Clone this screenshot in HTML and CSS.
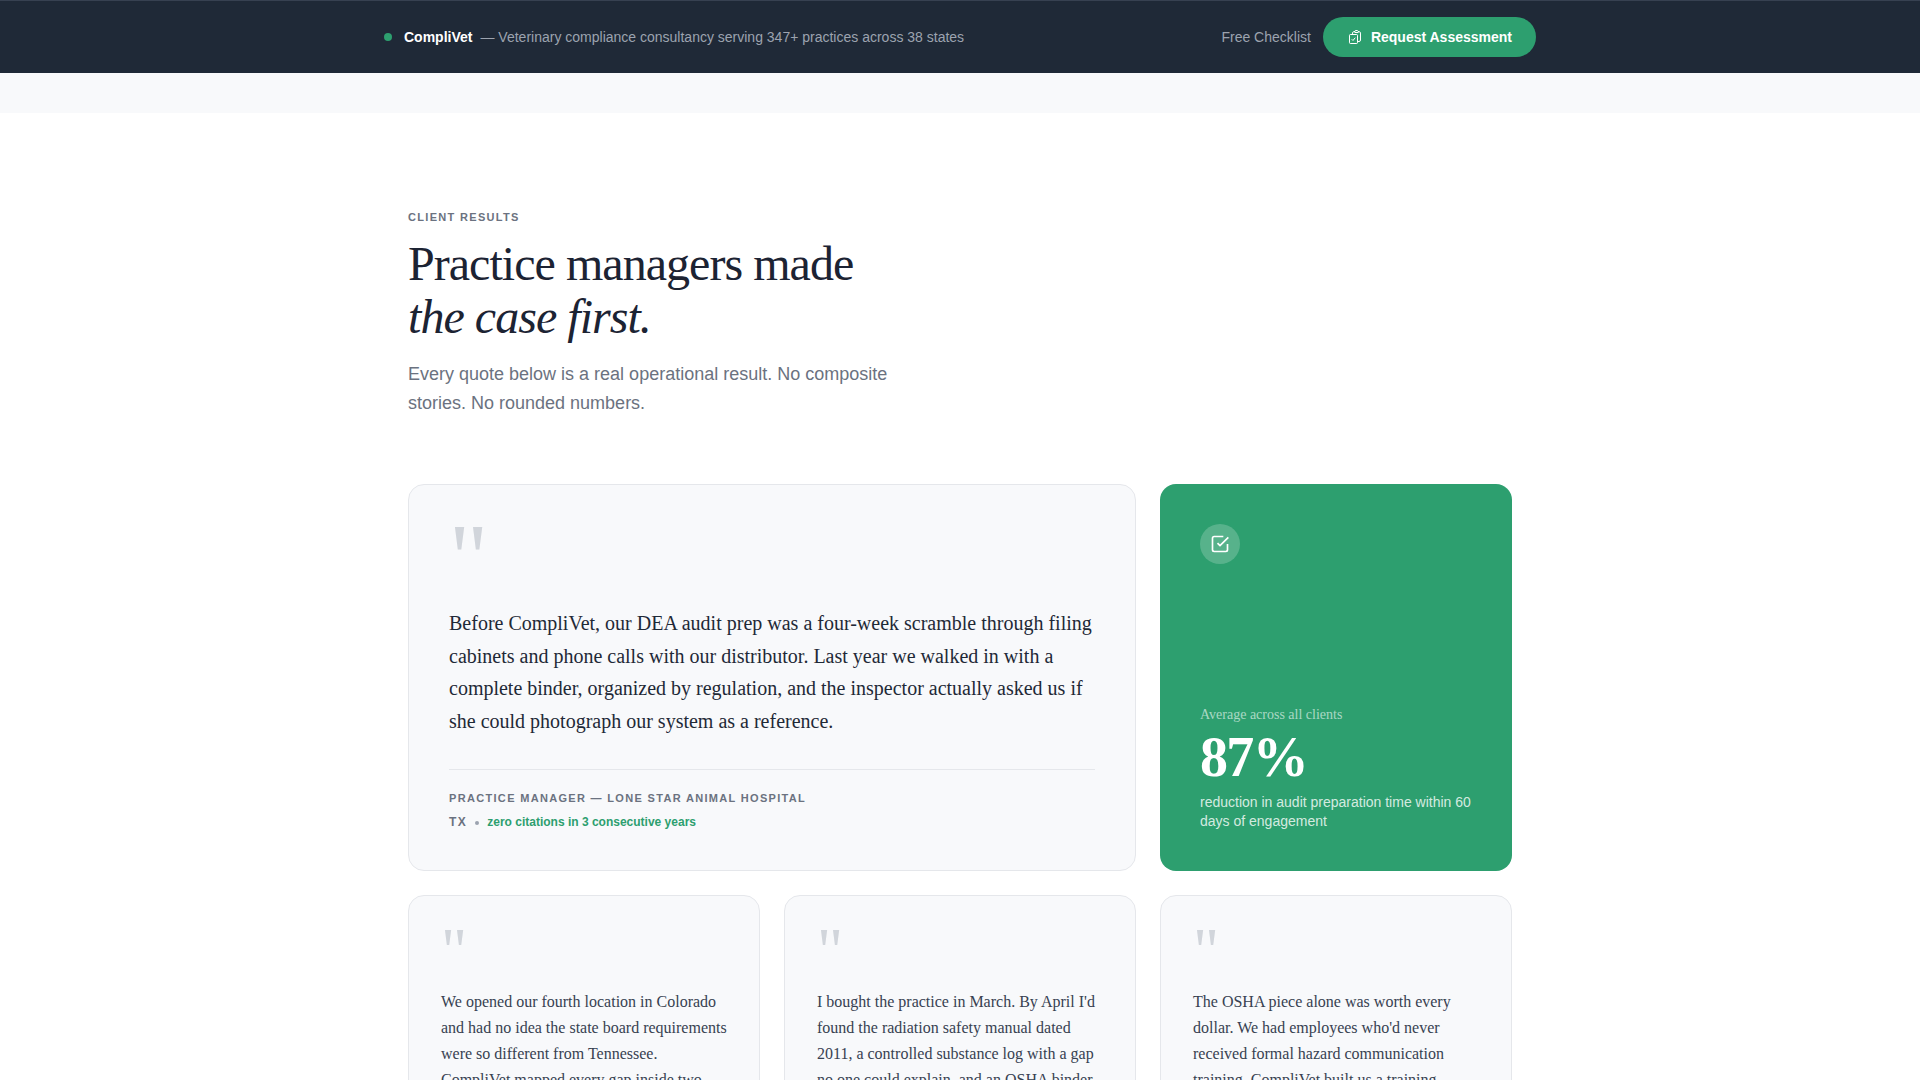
FILE: index.html
```html
<!DOCTYPE html>
<html lang="en">
<head>
  <meta charset="UTF-8">
  <meta name="viewport" content="width=device-width, initial-scale=1">
  <title>CompliVet - Client Results</title>
  <link rel="stylesheet" href="styles.css">
</head>
<body>
  <header class="topbar">
    <div class="topbar-inner">
      <div class="brand">
        <span class="brand-dot"></span>
        <p class="brand-text"><strong>CompliVet</strong><span>— Veterinary compliance consultancy serving 347+ practices across 38 states</span></p>
      </div>
      <nav class="topbar-actions">
        <a class="checklist-link" href="#checklist">Free Checklist</a>
        <a class="btn" href="#assessment">
          <svg class="btn-icon" viewBox="0 0 24 24" aria-hidden="true"><path d="M11.35 3.836c-.065.21-.1.433-.1.664 0 .414.336.75.75.75h4.5a.75.75 0 0 0 .75-.75 2.25 2.25 0 0 0-.1-.664m-5.8 0A2.251 2.251 0 0 1 13.5 2.25H15c1.012 0 1.867.668 2.15 1.586m-5.8 0c-.376.023-.75.05-1.124.08C9.095 4.01 8.25 4.973 8.25 6.108V8.25m8.9-4.414c.376.023.75.05 1.124.08 1.131.094 1.976 1.057 1.976 2.192V16.5A2.25 2.25 0 0 1 18 18.75h-2.25m-7.5-10.5H4.875c-.621 0-1.125.504-1.125 1.125v11.25c0 .621.504 1.125 1.125 1.125h9.75c.621 0 1.125-.504 1.125-1.125V18.75m-7.5-10.5h6.375c.621 0 1.125.504 1.125 1.125v9.375m-8.25-3 1.5 1.5 3-3.75"/></svg>
          Request Assessment
        </a>
      </nav>
    </div>
  </header>

  <main class="results">
    <div class="container">
      <div class="intro">
        <p class="eyebrow">Client Results</p>
        <h1>Practice managers made<br><em>the case first.</em></h1>
        <p class="lead">Every quote below is a real operational result. No composite stories. No rounded numbers.</p>
      </div>

      <div class="grid">
        <article class="card featured">
          <div class="mark" aria-hidden="true">"</div>
          <blockquote>Before CompliVet, our DEA audit prep was a four-week scramble through filing cabinets and phone calls with our distributor. Last year we walked in with a complete binder, organized by regulation, and the inspector actually asked us if she could photograph our system as a reference.</blockquote>
          <footer class="source">
            <p class="role">Practice Manager — Lone Star Animal Hospital</p>
            <p class="outcome">
              <span class="state">TX</span>
              <span class="sep"></span>
              <span class="result">zero citations in 3 consecutive years</span>
            </p>
          </footer>
        </article>

        <article class="stat">
          <div class="stat-icon">
            <svg viewBox="0 0 24 24" aria-hidden="true"><path d="M9 11l3 3L22 4"/><path d="M21 12v7a2 2 0 0 1-2 2H5a2 2 0 0 1-2-2V5a2 2 0 0 1 2-2h11"/></svg>
          </div>
          <div>
            <p class="stat-label">Average across all clients</p>
            <p class="stat-value">87%</p>
            <p class="stat-text">reduction in audit preparation time within 60 days of engagement</p>
          </div>
        </article>

        <article class="card">
          <div class="mark" aria-hidden="true">"</div>
          <blockquote>We opened our fourth location in Colorado and had no idea the state board requirements were so different from Tennessee. CompliVet mapped every gap inside two</blockquote>
        </article>

        <article class="card">
          <div class="mark" aria-hidden="true">"</div>
          <blockquote>I bought the practice in March. By April I'd found the radiation safety manual dated 2011, a controlled substance log with a gap no one could explain, and an OSHA binder</blockquote>
        </article>

        <article class="card">
          <div class="mark" aria-hidden="true">"</div>
          <blockquote>The OSHA piece alone was worth every dollar. We had employees who'd never received formal hazard communication training. CompliVet built us a training</blockquote>
        </article>
      </div>
    </div>
  </main>
</body>
</html>
```

FILE: styles.css
```css
:root {
  --green: #2d9f6f;
  --navy: #1f2937;
  --surface: #f8f9fb;
  --line: #e5e7eb;
  --muted: #6b7280;
  --serif: "Liberation Serif", "Times New Roman", serif;
  --sans: "Liberation Sans", Arial, sans-serif;
}

* {
  box-sizing: border-box;
}

body,
h1,
p,
blockquote {
  margin: 0;
}

body {
  font-family: var(--sans);
  background: var(--surface);
  color: var(--navy);
}

a {
  text-decoration: none;
}

/* Top bar */
.topbar {
  background: var(--navy);
  border-top: 1px solid #374151;
  padding: 16px 24px;
}

.topbar-inner {
  max-width: 1152px;
  margin: 0 auto;
  display: flex;
  align-items: center;
  justify-content: space-between;
  gap: 24px;
  font-size: 14px;
}

.brand {
  display: flex;
  align-items: center;
  gap: 12px;
}

.brand-dot {
  width: 8px;
  height: 8px;
  border-radius: 50%;
  background: var(--green);
}

.brand-text {
  display: flex;
  gap: 8px;
  color: #9ca3af;
}

.brand-text strong {
  color: #fff;
}

.topbar-actions {
  display: flex;
  align-items: center;
  gap: 12px;
}

.checklist-link {
  color: #9ca3af;
}

.btn {
  display: flex;
  align-items: center;
  gap: 8px;
  height: 40px;
  padding: 0 24px;
  border-radius: 20px;
  background: var(--green);
  color: #fff;
  font-weight: 700;
}

.btn-icon {
  width: 16px;
  height: 16px;
  fill: none;
  stroke: currentColor;
  stroke-width: 1.5;
  stroke-linecap: round;
  stroke-linejoin: round;
}

/* Results */
.results {
  margin-top: 40px;
  padding: 96px 24px;
  background: #fff;
}

.container {
  max-width: 1104px;
  margin: 0 auto;
}

.intro {
  max-width: 512px;
  margin-bottom: 66px;
}

.eyebrow,
.role {
  font-size: 11px;
  font-weight: 700;
  letter-spacing: 0.12em;
  text-transform: uppercase;
  color: var(--muted);
}

.eyebrow {
  line-height: 16px;
  margin-bottom: 12px;
}

h1 {
  font-family: var(--serif);
  font-size: 48px;
  font-weight: 400;
  line-height: 53px;
  letter-spacing: -0.02em;
  color: #1c2333;
  margin-bottom: 17px;
}

.lead {
  font-size: 18px;
  line-height: 29px;
  color: var(--muted);
}

.grid {
  display: grid;
  grid-template-columns: repeat(3, 1fr);
  gap: 24px;
}

.card {
  padding: 32px;
  border: 1px solid var(--line);
  border-radius: 16px;
  background: var(--surface);
}

.mark {
  font-family: var(--serif);
  font-size: 64px;
  line-height: 45px;
  margin-bottom: 16px;
  color: #d1d5db;
}

.card blockquote {
  font-family: var(--serif);
  font-size: 16px;
  line-height: 26px;
  color: #374151;
}

.featured {
  grid-column: span 2;
  padding: 40px;
}

.featured .mark {
  font-size: 96px;
  line-height: 66px;
}

.featured blockquote {
  font-size: 20px;
  line-height: 1.625;
  color: var(--navy);
}

.source {
  margin-top: 32px;
  padding-top: 20px;
  border-top: 1px solid var(--line);
}

.role {
  line-height: 17px;
  margin-bottom: 8px;
}

.outcome {
  display: flex;
  align-items: center;
  gap: 8px;
  font-size: 12px;
  line-height: 15px;
  font-weight: 700;
}

.state {
  letter-spacing: 0.12em;
  color: var(--muted);
}

.sep {
  width: 4px;
  height: 4px;
  border-radius: 50%;
  background: #9ca3af;
}

.result {
  color: var(--green);
}

/* Stat card */
.stat {
  display: flex;
  flex-direction: column;
  justify-content: space-between;
  padding: 40px;
  border-radius: 16px;
  background: var(--green);
  color: #fff;
}

.stat-icon {
  display: grid;
  place-items: center;
  width: 40px;
  height: 40px;
  border-radius: 50%;
  background: rgba(255, 255, 255, 0.2);
}

.stat-icon svg {
  width: 20px;
  height: 20px;
  fill: none;
  stroke: #fff;
  stroke-width: 2;
}

.stat-label {
  font-family: var(--serif);
  font-size: 14px;
  line-height: 21px;
  margin-bottom: 4px;
  color: rgba(255, 255, 255, 0.6);
}

.stat-value {
  font-family: var(--serif);
  font-size: 56px;
  font-weight: 700;
  line-height: 56px;
  letter-spacing: -0.03em;
  margin-bottom: 8px;
}

.stat-text {
  font-size: 14px;
  line-height: 19px;
  color: rgba(255, 255, 255, 0.8);
}
```
